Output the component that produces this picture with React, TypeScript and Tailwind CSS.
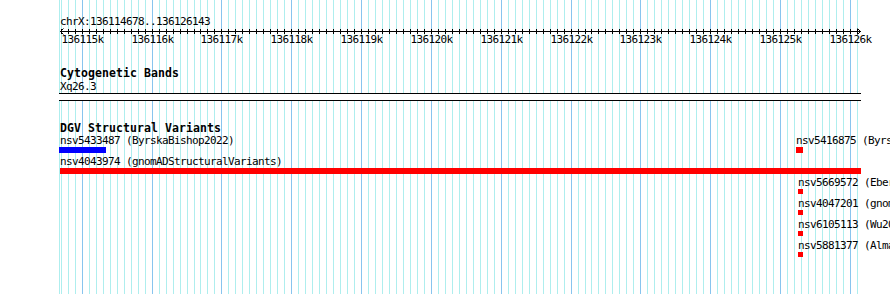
const START = 136114678;
const MAJOR_X = 82.3; // x of 136115k
const PX_PER_100 = 6.982;

const FEATURES = [
  { x: 59, w: 47, h: 6, row: 0, pad: 1, color: 'bg-[#0000ff]', label: 'nsv5433487 (ByrskaBishop2022)' },
  { x: 796, w: 7, h: 6, row: 0, pad: 0, color: 'bg-[#ff0000]', label: 'nsv5416875 (ByrskaBishop2022)' },
  { x: 60, w: 801, h: 6, row: 1, pad: 0, color: 'bg-[#ff0000]', label: 'nsv4043974 (gnomADStructuralVariants)' },
  { x: 798, w: 5, h: 5, row: 2, pad: 0, color: 'bg-[#ff0000]', label: 'nsv5669572 (Ebert2021)' },
  { x: 798, w: 5, h: 5, row: 3, pad: 0, color: 'bg-[#ff0000]', label: 'nsv4047201 (gnomADStructuralVariants)' },
  { x: 798, w: 5, h: 5, row: 4, pad: 0, color: 'bg-[#ff0000]', label: 'nsv6105113 (Wu2021)' },
  { x: 798, w: 5, h: 5, row: 5, pad: 0, color: 'bg-[#ff0000]', label: 'nsv5881377 (Almarri2020)' },
];

const gridX = (k: number) => Math.floor(MAJOR_X + PX_PER_100 * k);

function Grid() {
  const lines = [];
  for (let k = -3; k <= 111; k++) {
    lines.push(
      <rect key={k} x={gridX(k)} y={0} width={1} height={294} fill={k % 10 === 0 ? '#88c4ee' : '#aeeeee'} />
    );
  }
  return (
    <svg className="absolute inset-0" width={890} height={294}>
      <rect x={59} y={0} width={1} height={294} fill="#aeeeee" />
      {lines}
    </svg>
  );
}

function Ruler() {
  const ticks = [];
  for (let k = -3; k <= 111; k++) {
    const x = gridX(k) + 0.5;
    ticks.push(<line key={k} x1={x} x2={x} y1={1} y2={6} stroke="#000" />);
  }
  const labels = [];
  for (let i = 0; i <= 11; i++) {
    labels.push(
      <span
        key={i}
        className="absolute top-[5px] -translate-x-1/2 leading-[13px]"
        style={{ left: gridX(i * 10) + 0.5 }}
      >
        {136115 + i}k
      </span>
    );
  }
  return (
    <div className="relative h-[22px]">
      <svg className="absolute left-0 top-0" width={890} height={8}>
        <line x1={60} x2={861} y1={3.5} y2={3.5} stroke="#000" />
        <polyline points="63.5,0.5 60.5,3.5 63.5,6.5" fill="none" stroke="#000" />
        <polyline points="857.5,0.5 860.5,3.5 857.5,6.5" fill="none" stroke="#000" />
        {ticks}
      </svg>
      {labels}
    </div>
  );
}

export default function App() {
  return (
    <div className="relative w-[890px] h-[294px] overflow-hidden bg-white text-black font-['DejaVu_Sans_Mono',monospace] text-[11px] tracking-[-0.62px]">
      <Grid />
      <div className="relative flex flex-col">
        {/* Ruler */}
        <div className="pt-[15px]">
          <div className="pl-[60px] leading-[13px]">chrX:{START}..136126143</div>
          <Ruler />
        </div>

        {/* Cytogenetic Bands */}
        <div className="mt-[17px]">
          <div className="pl-[60px] h-[13px] font-bold text-[11.5px] tracking-[0.08px] leading-[12px]">Cytogenetic Bands</div>
          <div className="pl-[60px] h-[13px] leading-[13px]">Xq26.3</div>
          <div className="ml-[59px] w-[802px] h-[8px] bg-white border-y border-black" />
        </div>

        {/* DGV Structural Variants */}
        <div className="mt-[21px]">
          <div className="pl-[60px] font-bold text-[11.5px] tracking-[0.08px] leading-[12px]">DGV Structural Variants</div>
          <div className="relative mt-[1px] h-[160px]">
            {FEATURES.map((f, i) => (
              <div key={i} className="absolute" style={{ left: f.x, top: f.row * 21 }}>
                <div className="whitespace-nowrap leading-[12px]" style={{ paddingLeft: f.pad }}>{f.label}</div>
                <div className={f.color} style={{ width: f.w, height: f.h }} />
              </div>
            ))}
          </div>
        </div>
      </div>
    </div>
  );
}
